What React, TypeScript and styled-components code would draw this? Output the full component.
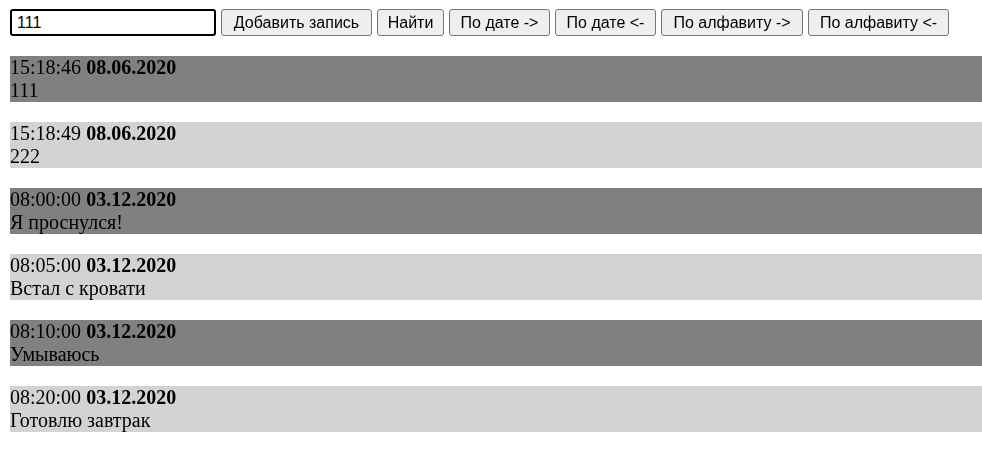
import React from "react";
import styled, { createGlobalStyle } from "styled-components";

const Global = createGlobalStyle`
  html, body { margin: 0; padding: 0; background: #fff; }
  body { font-family: "Liberation Serif", "Times New Roman", serif; }
`;

const Page = styled.div`
  padding: 9px 0 0 10px;
`;

const Toolbar = styled.div`
  display: flex;
  align-items: center;
  gap: 5px;
  height: 27px;
  margin-bottom: 20px;
`;

const Input = styled.input`
  box-sizing: border-box;
  width: 206px;
  height: 27px;
  border: 2px solid #000;
  border-radius: 3px;
  padding: 0 5px;
  font-family: "Liberation Sans", Arial, sans-serif;
  font-size: 16px;
  color: #000;
  outline: none;
  caret-color: #000;
`;

const Button = styled.button<{ $w: number }>`
  box-sizing: border-box;
  width: ${(p) => p.$w}px;
  height: 27px;
  padding: 0;
  border: 1px solid #767676;
  border-radius: 3px;
  background: #efefef;
  font-family: "Liberation Sans", Arial, sans-serif;
  font-size: 16px;
  color: #000;
  white-space: nowrap;
`;

const List = styled.div`
  display: flex;
  flex-direction: column;
  gap: 20px;
`;

const Row = styled.div<{ $dark: boolean }>`
  background: ${(p) => (p.$dark ? "#808080" : "#d3d3d3")};
  font-size: 20px;
  line-height: 23px;
  color: #000;
`;

const DateB = styled.b`
  font-weight: bold;
`;

const entries = [
  { t: "15:18:46", d: "08.06.2020", text: "111" },
  { t: "15:18:49", d: "08.06.2020", text: "222" },
  { t: "08:00:00", d: "03.12.2020", text: "Я проснулся!" },
  { t: "08:05:00", d: "03.12.2020", text: "Встал с кровати" },
  { t: "08:10:00", d: "03.12.2020", text: "Умываюсь" },
  { t: "08:20:00", d: "03.12.2020", text: "Готовлю завтрак" },
];

const buttons: [string, number][] = [
  ["Добавить запись", 151],
  ["Найти", 67],
  ["По дате ->", 101],
  ["По дате <-", 101],
  ["По алфавиту ->", 142],
  ["По алфавиту <-", 141],
];

export default function App() {
  return (
    <>
      <Global />
      <Page>
        <Toolbar>
          <Input defaultValue="111" autoFocus />
          {buttons.map(([label, w]) => (
            <Button key={label} $w={w}>
              {label}
            </Button>
          ))}
        </Toolbar>
        <List>
          {entries.map((e, i) => (
            <Row key={i} $dark={i % 2 === 0}>
              <div>
                {e.t} <DateB>{e.d}</DateB>
              </div>
              <div>{e.text}</div>
            </Row>
          ))}
        </List>
      </Page>
    </>
  );
}
